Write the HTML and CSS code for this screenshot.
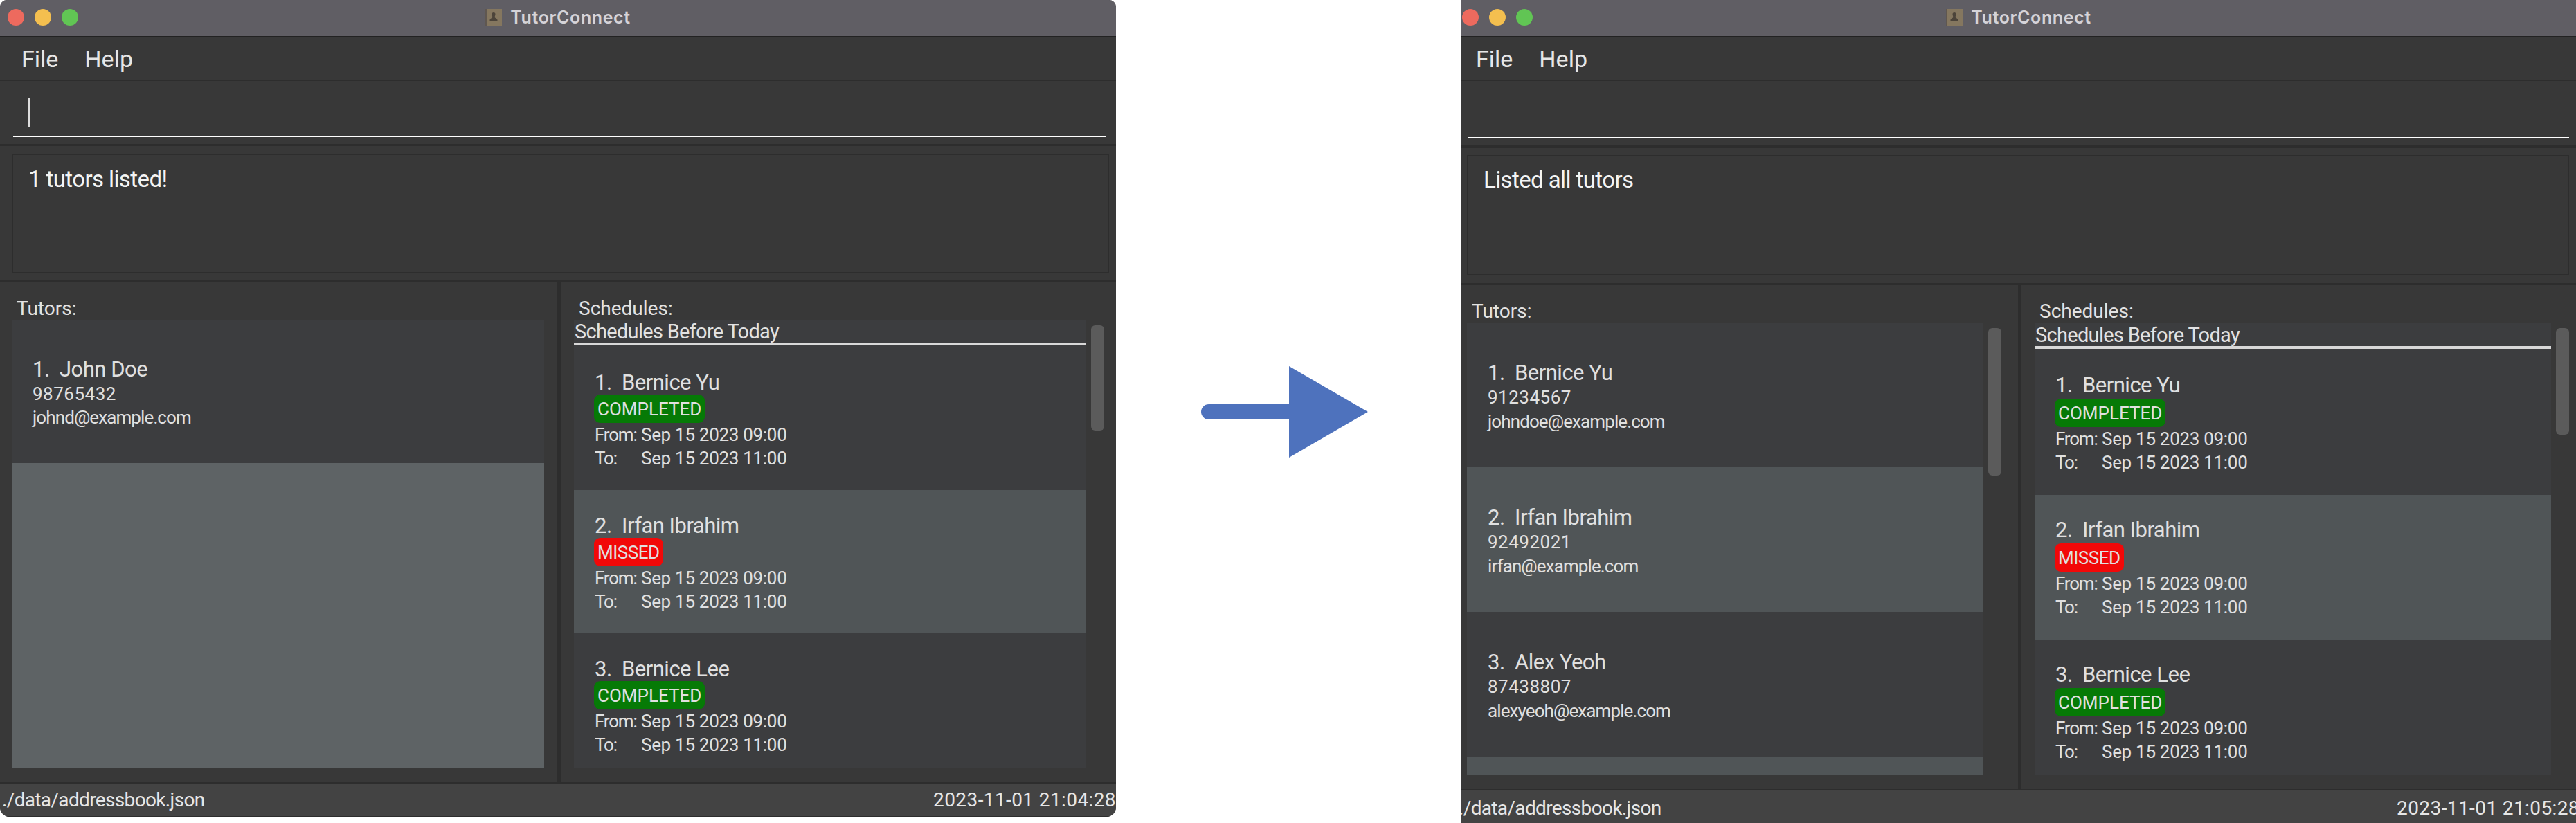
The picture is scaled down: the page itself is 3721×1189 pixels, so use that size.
FILE: index.html
```html
<!DOCTYPE html>
<html lang="en">
<head>
    <meta charset="UTF-8">
    <meta name="viewport" content="width=device-width, initial-scale=1.0">
    <title>TutorConnect</title>
    <link rel="stylesheet" href="styles.css">
</head>
<body>
    <div class="stage">
        <div class="window window-before">
            <div class="titlebar">
                <div class="lights">
                    <span class="light light-red"></span>
                    <span class="light light-yellow"></span>
                    <span class="light light-green"></span>
                </div>
                <div class="app-title">
                    <svg class="app-icon" viewBox="0 0 24 24"><rect width="24" height="24" fill="#85775f"/><rect width="2" height="24" fill="#5f5750"/><path d="M9.500 7.500a2.500 2.500 0 0 1 5 0c0 1.500-.8 2.500-.8 4.200 0 1.300 3.800 1.900 3.800 4.300v1.500h-11V16c0-2.400 3.800-3 3.800-4.300 0-1.700-.8-2.700-.8-4.200z" fill="#4c443a"/></svg>
                    <span>TutorConnect</span>
                </div>
            </div>
            <div class="menubar">
                <span class="menu-item">File</span>
                <span class="menu-item">Help</span>
            </div>
            <div class="command">
                <div class="command-input"><span class="caret"></span></div>
            </div>
            <div class="result-wrap">
                <div class="result">1 tutors listed!</div>
            </div>
            <div class="panes">
                <div class="pane pane-tutors">
                    <div class="pane-label">Tutors:</div>
                    <div class="pane-body">
                        <div class="list">
                            <div class="card tutor-card">
                                <div class="card-name">1.  John Doe</div>
                                <div class="card-line card-phone">98765432</div>
                                <div class="card-line card-email">johnd@example.com</div>
                            </div>
                            <div class="list-empty"></div>
                        </div>
                    </div>
                </div>
                <div class="splitter"></div>
                <div class="pane pane-schedules">
                    <div class="pane-label">Schedules:</div>
                    <div class="pane-body">
                        <div class="list">
                            <div class="list-heading">Schedules Before Today</div>
                            <div class="card schedule-card">
                                <div class="card-name">1.  Bernice Yu</div>
                                <div class="badge-row"><span class="badge badge-done">COMPLETED</span></div>
                                <div class="time-row"><span class="time-label">From:</span><span>Sep 15 2023 09:00</span></div>
                                <div class="time-row"><span class="time-label">To:</span><span>Sep 15 2023 11:00</span></div>
                            </div>
                            <div class="card schedule-card card-alt">
                                <div class="card-name">2.  Irfan Ibrahim</div>
                                <div class="badge-row"><span class="badge badge-missed">MISSED</span></div>
                                <div class="time-row"><span class="time-label">From:</span><span>Sep 15 2023 09:00</span></div>
                                <div class="time-row"><span class="time-label">To:</span><span>Sep 15 2023 11:00</span></div>
                            </div>
                            <div class="card schedule-card">
                                <div class="card-name">3.  Bernice Lee</div>
                                <div class="badge-row"><span class="badge badge-done">COMPLETED</span></div>
                                <div class="time-row"><span class="time-label">From:</span><span>Sep 15 2023 09:00</span></div>
                                <div class="time-row"><span class="time-label">To:</span><span>Sep 15 2023 11:00</span></div>
                            </div>
                        </div>
                        <div class="scrollbar"><div class="thumb thumb-schedules"></div></div>
                    </div>
                </div>
            </div>
            <div class="statusbar">
                <span>./data/addressbook.json</span>
                <span class="status-time">2023-11-01 21:04:28</span>
            </div>
        </div>

        <div class="arrow-gap">
            <svg class="arrow" viewBox="0 0 241 132"><path d="M127 0 241 66 127 132V77H11a11 11 0 0 1 0-22H127z" fill="#4e72bd"/></svg>
        </div>

        <div class="window window-after">
            <div class="titlebar">
                <div class="lights">
                    <span class="light light-red"></span>
                    <span class="light light-yellow"></span>
                    <span class="light light-green"></span>
                </div>
                <div class="app-title">
                    <svg class="app-icon" viewBox="0 0 24 24"><rect width="24" height="24" fill="#85775f"/><rect width="2" height="24" fill="#5f5750"/><path d="M9.500 7.500a2.500 2.500 0 0 1 5 0c0 1.500-.8 2.500-.8 4.200 0 1.300 3.800 1.900 3.800 4.300v1.500h-11V16c0-2.400 3.800-3 3.800-4.300 0-1.700-.8-2.700-.8-4.200z" fill="#4c443a"/></svg>
                    <span>TutorConnect</span>
                </div>
            </div>
            <div class="menubar">
                <span class="menu-item">File</span>
                <span class="menu-item">Help</span>
            </div>
            <div class="command">
                <div class="command-input"></div>
            </div>
            <div class="result-wrap">
                <div class="result">Listed all tutors</div>
            </div>
            <div class="panes">
                <div class="pane pane-tutors">
                    <div class="pane-label">Tutors:</div>
                    <div class="pane-body">
                        <div class="list">
                            <div class="card tutor-card">
                                <div class="card-name">1.  Bernice Yu</div>
                                <div class="card-line card-phone">91234567</div>
                                <div class="card-line card-email">johndoe@example.com</div>
                            </div>
                            <div class="card tutor-card card-alt">
                                <div class="card-name">2.  Irfan Ibrahim</div>
                                <div class="card-line card-phone">92492021</div>
                                <div class="card-line card-email">irfan@example.com</div>
                            </div>
                            <div class="card tutor-card">
                                <div class="card-name">3.  Alex Yeoh</div>
                                <div class="card-line card-phone">87438807</div>
                                <div class="card-line card-email">alexyeoh@example.com</div>
                            </div>
                            <div class="card tutor-card card-alt"></div>
                        </div>
                        <div class="scrollbar"><div class="thumb thumb-tutors"></div></div>
                    </div>
                </div>
                <div class="splitter"></div>
                <div class="pane pane-schedules">
                    <div class="pane-label">Schedules:</div>
                    <div class="pane-body">
                        <div class="list">
                            <div class="list-heading">Schedules Before Today</div>
                            <div class="card schedule-card">
                                <div class="card-name">1.  Bernice Yu</div>
                                <div class="badge-row"><span class="badge badge-done">COMPLETED</span></div>
                                <div class="time-row"><span class="time-label">From:</span><span>Sep 15 2023 09:00</span></div>
                                <div class="time-row"><span class="time-label">To:</span><span>Sep 15 2023 11:00</span></div>
                            </div>
                            <div class="card schedule-card card-alt">
                                <div class="card-name">2.  Irfan Ibrahim</div>
                                <div class="badge-row"><span class="badge badge-missed">MISSED</span></div>
                                <div class="time-row"><span class="time-label">From:</span><span>Sep 15 2023 09:00</span></div>
                                <div class="time-row"><span class="time-label">To:</span><span>Sep 15 2023 11:00</span></div>
                            </div>
                            <div class="card schedule-card">
                                <div class="card-name">3.  Bernice Lee</div>
                                <div class="badge-row"><span class="badge badge-done">COMPLETED</span></div>
                                <div class="time-row"><span class="time-label">From:</span><span>Sep 15 2023 09:00</span></div>
                                <div class="time-row"><span class="time-label">To:</span><span>Sep 15 2023 11:00</span></div>
                            </div>
                        </div>
                        <div class="scrollbar"><div class="thumb thumb-schedules"></div></div>
                    </div>
                </div>
            </div>
            <div class="statusbar">
                <span class="status-path">./data/addressbook.json</span>
                <span class="status-time">2023-11-01 21:05:28</span>
            </div>
        </div>
    </div>
</body>
</html>
```

FILE: styles.css
```css
html, body {
    margin: 0;
    padding: 0;
    background-color: #fff;
}

body {
    width: 3721px;
    height: 1189px;
    overflow: hidden;
    font-family: Roboto, "Noto Sans", sans-serif;
    color: #e2e2e2;
}

.stage {
    display: flex;
    height: 1189px;
}

.window {
    display: flex;
    flex-direction: column;
    flex: none;
    overflow: hidden;
    background-color: #383838;
}

.window-before {
    width: 1612px;
    height: 1180px;
    border-radius: 10px 10px 14px 14px;
}

.window-after {
    width: 1610px;
    height: 1189px;
}

.arrow-gap {
    flex: none;
    width: 499px;
    height: 1189px;
    padding-top: 529px;
    padding-left: 123px;
    box-sizing: border-box;
}

.arrow {
    display: block;
    width: 241px;
    height: 132px;
}

/* title bar */
.titlebar {
    flex: none;
    position: relative;
    display: flex;
    align-items: center;
    justify-content: center;
    height: 53px;
    padding-bottom: 2px;
    box-sizing: border-box;
    background-color: #605e64;
    border-bottom: 1px solid #222;
}

.lights {
    position: absolute;
    top: 13px;
    left: 11px;
    display: flex;
    gap: 15px;
}

.window-after .lights {
    left: 1px;
}

.light {
    width: 24px;
    height: 24px;
    border-radius: 50%;
}

.light-red { background-color: #ed6a5e; }
.light-yellow { background-color: #f4bf4f; }
.light-green { background-color: #61c554; }

.app-title {
    display: flex;
    align-items: center;
    gap: 12px;
    font-family: Inter, sans-serif;
    font-size: 25px;
    font-weight: 600;
    letter-spacing: 0.6px;
    color: #d5d3d8;
}

.app-icon {
    display: block;
    width: 24px;
    height: 24px;
}

/* menu */
.menubar {
    flex: none;
    display: flex;
    align-items: center;
    gap: 38px;
    height: 60px;
    padding: 2px 0 0 31px;
    border-bottom: 2px solid #2d2d2d;
    font-size: 34px;
    color: #e6e6e6;
}

.window-after .menubar {
    padding-left: 21px;
}

/* command box */
.command {
    flex: none;
    height: 91px;
    padding: 0 15px 0 19px;
    border-bottom: 3px solid #2d2d2d;
}

.window-after .command {
    height: 93px;
    border-bottom-width: 4px;
    padding-left: 10px;
    padding-right: 10px;
}

.command-input {
    height: 81px;
    padding: 24px 0 0 22px;
    box-sizing: border-box;
    border-bottom: 2px solid #fff;
}

.window-after .command-input {
    height: 83px;
}

.caret {
    display: block;
    width: 2px;
    height: 43px;
    background-color: #ddd;
}

/* result box */
.result-wrap {
    flex: none;
    padding: 11px 10px 10px 17px;
    border-bottom: 3px solid #2d2d2d;
}

.window-after .result-wrap {
    padding: 10px 10px 11px 8px;
}

.result {
    height: 173px;
    box-sizing: border-box;
    padding: 13px 22px;
    border: 2px solid #2d2d2d;
    font-size: 33px;
    line-height: 44px;
    letter-spacing: -0.6px;
    color: #f4f4f4;
}

.window-after .result {
    height: 174px;
    padding-top: 12px;
}

/* tutors and schedules */
.panes {
    flex: 1;
    display: flex;
    min-height: 0;
}

.pane {
    display: flex;
    flex-direction: column;
    flex: none;
    box-sizing: border-box;
    padding-bottom: 21px;
}

.pane-tutors {
    width: 805px;
    padding-left: 17px;
}

.pane-schedules {
    width: 802px;
    padding-left: 19px;
}

.window-after .pane-tutors {
    width: 804px;
    padding-left: 8px;
    padding-bottom: 20px;
}

.window-after .pane-schedules {
    width: 802px;
    padding-left: 20px;
    padding-bottom: 20px;
}

.splitter {
    flex: none;
    width: 5px;
    background-color: #2d2d2d;
}

.window-after .splitter {
    width: 4px;
}

.pane-label {
    flex: none;
    height: 54px;
    padding: 22px 0 0 7px;
    box-sizing: border-box;
    font-size: 28px;
    line-height: 32px;
}

.pane-body {
    flex: 1;
    display: flex;
    min-height: 0;
}

.list {
    flex: none;
    width: 740px;
    display: flex;
    flex-direction: column;
    overflow: hidden;
    background-color: #3c3d3f;
}

.pane-tutors .list {
    width: 769px;
}

.window-after .list,
.window-after .pane-tutors .list {
    width: 746px;
}

.list-heading {
    flex: none;
    height: 31px;
    margin-bottom: 2px;
    padding: 2px 0 0 1px;
    border-bottom: 4px solid #d8d8d8;
    font-size: 29px;
    line-height: 31px;
    letter-spacing: -0.7px;
    white-space: nowrap;
}

.window-after .list-heading {
    height: 32px;
    line-height: 32px;
}

.list-empty {
    flex: 1;
    background-color: #5e6365;
}

.card {
    flex: none;
    height: 207px;
    box-sizing: border-box;
    color: #e0e0e0;
}

.window-after .card {
    height: 209px;
}

.card-alt {
    background-color: #505557;
}

.tutor-card {
    padding: 54px 0 0 30px;
}

.window-after .tutor-card {
    padding-top: 55px;
}

.schedule-card {
    padding: 33px 0 0 30px;
}

.window-after .schedule-card {
    padding-top: 32px;
}

.card-name {
    height: 36px;
    font-size: 31px;
    line-height: 36px;
    letter-spacing: -0.5px;
    white-space: pre;
}

.schedule-card .card-name {
    padding-top: 1px;
    height: 35px;
}

.card-line {
    font-size: 26px;
    line-height: 34px;
}

.window-after .card-line {
    line-height: 35px;
}

.card-phone {
    letter-spacing: 0.5px;
}

.card-email {
    letter-spacing: -0.9px;
}

.badge-row {
    display: flex;
}

.window-after .badge-row {
    margin-top: 2px;
}

.badge {
    height: 40px;
    margin-left: -1px;
    padding: 1px 5px 0;
    border-radius: 9px;
    font-size: 26px;
    line-height: 40px;
}

.badge-done {
    background-color: #067a06;
}

.badge-missed {
    background-color: #f20808;
    letter-spacing: -0.5px;
}

.time-row {
    display: flex;
    height: 33px;
    padding-top: 1px;
    font-size: 26px;
    line-height: 33px;
    letter-spacing: -0.3px;
}

.time-label {
    flex: none;
    width: 67px;
    letter-spacing: -1.2px;
}

.scrollbar {
    flex: none;
    width: 19px;
    margin-left: 7px;
    padding-top: 8px;
}

.thumb {
    border-radius: 6px;
    background-color: #5b5b5b;
}

.thumb-schedules {
    height: 152px;
}

.window-after .thumb-schedules {
    height: 154px;
}

.thumb-tutors {
    height: 213px;
}

/* status bar */
.statusbar {
    flex: none;
    height: 47px;
    display: flex;
    align-items: center;
    justify-content: space-between;
    padding-left: 3px;
    background-color: #434343;
    border-top: 2px solid #2d2d2d;
    border-bottom: 1px solid #2d2d2d;
    font-size: 28px;
    letter-spacing: -0.65px;
    color: #e6e6e6;
    white-space: nowrap;
}

.window-after .statusbar {
    height: 44px;
    padding-top: 3px;
    padding-left: 0;
    border-bottom: none;
}

.status-path {
    margin-left: -4px;
}

.status-time {
    letter-spacing: 0.4px;
}

.window-after .status-time {
    margin-right: -5px;
}
```
